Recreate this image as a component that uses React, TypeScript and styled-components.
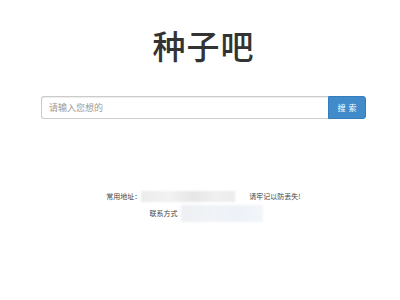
import styled, { createGlobalStyle } from 'styled-components'

const Global = createGlobalStyle`
  html, body {
    margin: 0;
    padding: 0;
    background: #fff;
    font-family: "Liberation Sans", "Noto Sans CJK SC", sans-serif;
    color: #333;
  }
`

const Page = styled.div`
  width: 400px;
  height: 300px;
  display: flex;
  flex-direction: column;
  align-items: center;
  padding-left: 7px;
  box-sizing: border-box;
`

const Title = styled.h1`
  margin: 24px 0 0;
  font-family: "Noto Sans CJK SC", sans-serif;
  font-size: 33px;
  font-weight: 500;
  line-height: 42px;
  color: #333;
  letter-spacing: 1px;
`

const SearchBar = styled.form`
  display: flex;
  width: 325px;
  height: 23px;
  margin-top: 30px;
`

const Input = styled.input`
  flex: 1;
  min-width: 0;
  height: 100%;
  box-sizing: border-box;
  border: 1px solid #ccc;
  border-right: none;
  border-radius: 3px 0 0 3px;
  padding: 0 7px;
  font-family: "Noto Sans CJK SC", sans-serif;
  font-size: 9px;
  color: #555;
  box-shadow: inset 0 1px 1px rgba(0, 0, 0, 0.075);
  outline: none;

  &::placeholder {
    color: #999;
  }
`

const Button = styled.button`
  width: 38px;
  height: 100%;
  border: 1px solid #357ebd;
  border-radius: 0 3px 3px 0;
  background: #428bca;
  color: #fff;
  font-family: "Noto Sans CJK SC", sans-serif;
  font-size: 8px;
  letter-spacing: 3px;
  padding: 0 0 0 3px;
`

const Footer = styled.div`
  margin-top: 70px;
  display: flex;
  flex-direction: column;
  align-items: center;
  gap: 3px;
  font-family: "Noto Sans CJK SC", sans-serif;
  font-size: 7px;
  color: #444;
`

const Line = styled.div<{ $shift?: number }>`
  display: flex;
  align-items: center;
  height: 14px;
  margin-left: ${(p) => p.$shift ?? 0}px;
`

const Blur = styled.span<{ $w: number; $h?: number; $l?: number; $r?: number }>`
  display: inline-block;
  width: ${(p) => p.$w}px;
  height: ${(p) => p.$h ?? 11}px;
  margin: 0 ${(p) => p.$r ?? 0}px 0 ${(p) => p.$l ?? 0}px;
  background: linear-gradient(90deg, #ececec, #f2f2f2 30%, #e6e6e6 55%, #f0f0f0 80%, #ececec);
  filter: blur(1px);
`

const BlurBlue = styled(Blur)`
  background: linear-gradient(90deg, #eef0f3, #f0f3f7 40%, #eef2f8 70%, #f2f5fa);
`

export default function App() {
  return (
    <>
      <Global />
      <Page>
        <Title>种子吧</Title>
        <SearchBar onSubmit={(e) => e.preventDefault()}>
          <Input placeholder="请输入您想的" />
          <Button type="submit">搜索</Button>
        </SearchBar>
        <Footer>
          <Line>
            常用地址：
            <Blur $w={94} $r={14} />
            请牢记以防丢失!
          </Line>
          <Line $shift={6}>
            联系方式
            <BlurBlue $w={82} $h={17} $l={4} />
          </Line>
        </Footer>
      </Page>
    </>
  )
}
